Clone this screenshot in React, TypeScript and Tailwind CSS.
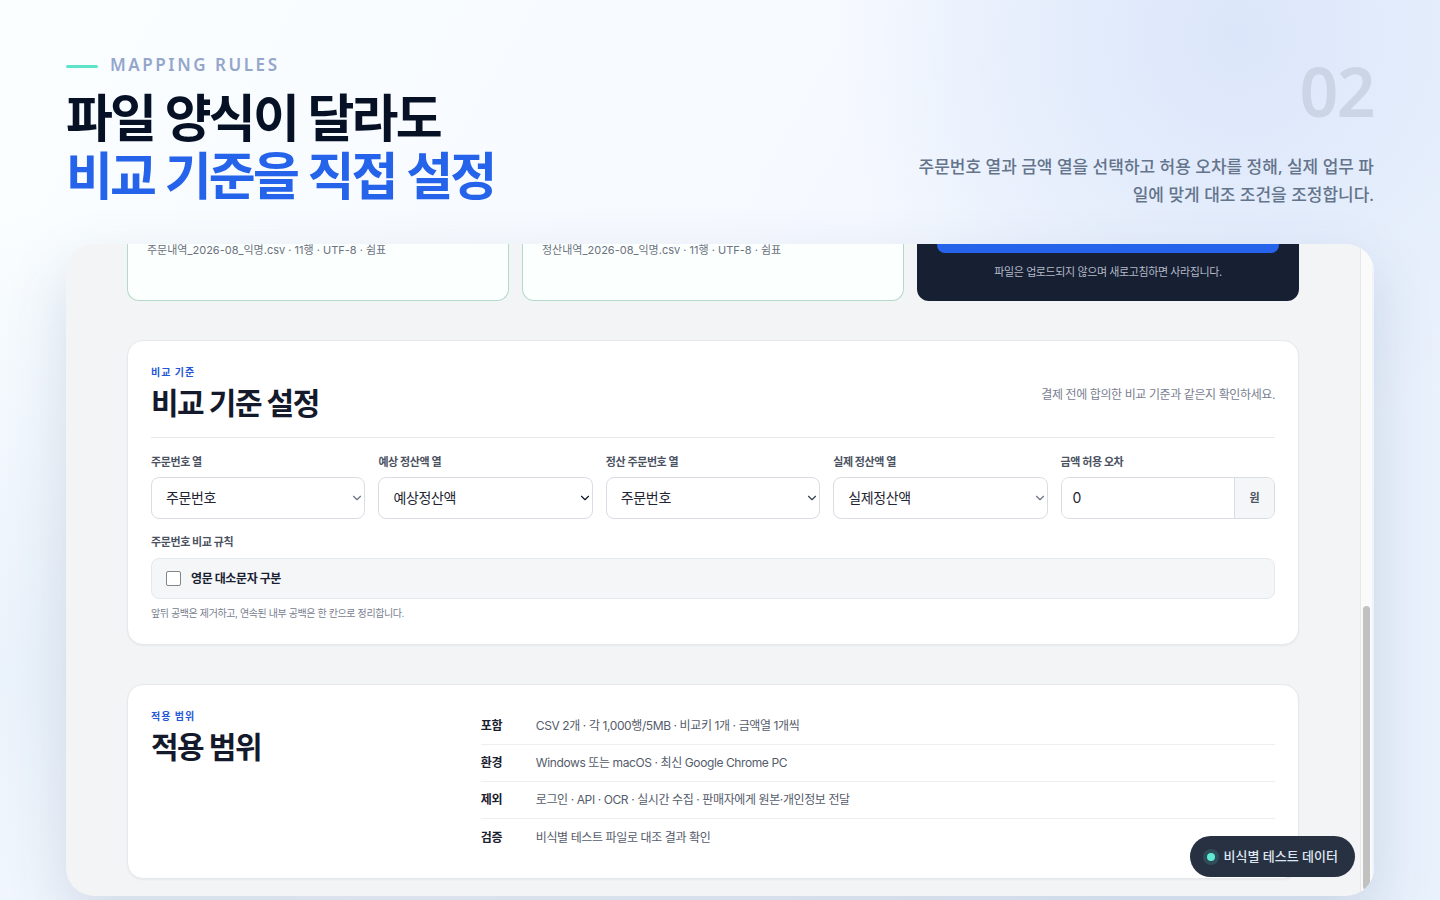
import React from 'react';
import { ChevronDown } from 'lucide-react';

const files = [
  '주문내역_2026-08_익명.csv · 11행 · UTF-8 · 쉼표',
  '정산내역_2026-08_익명.csv · 11행 · UTF-8 · 쉼표',
];

const columns = [
  { id: 'order-key', label: '주문번호 열', value: '주문번호', chevron: 'text-gray-500' },
  { id: 'expected', label: '예상 정산액 열', value: '예상정산액', chevron: 'text-gray-900' },
  { id: 'settle-key', label: '정산 주문번호 열', value: '주문번호', chevron: 'text-gray-700' },
  { id: 'actual', label: '실제 정산액 열', value: '실제정산액', chevron: 'text-gray-500' },
];

const scope = [
  { term: '포함', detail: 'CSV 2개 · 각 1,000행/5MB · 비교키 1개 · 금액열 1개씩' },
  { term: '환경', detail: 'Windows 또는 macOS · 최신 Google Chrome PC' },
  { term: '제외', detail: '로그인 · API · OCR · 실시간 수집 · 판매자에게 원본·개인정보 전달' },
  { term: '검증', detail: '비식별 테스트 파일로 대조 결과 확인' },
];

const SlideHeader = () => (
  <header className="flex items-end justify-between">
    <div className="pb-[5px]">
      <div className="flex items-center gap-3">
        <span className="mt-0.5 h-[3px] w-8 rounded-full bg-[#5fe3cb]" />
        <span className="text-[17px] leading-[26px] font-semibold tracking-[0.15em] text-[#94a6cb]">
          MAPPING RULES
        </span>
      </div>
      <h1 className="mt-2.5 text-[51px] leading-[58px] font-bold tracking-[-0.055em] text-[#061126]">
        파일 양식이 달라도
        <span className="block text-[#2563eb]">비교 기준을 직접 설정</span>
      </h1>
    </div>
    <div className="flex flex-col items-end text-right">
      <span className="text-[68px] leading-[66px] font-semibold tracking-tight text-[#ccd5e6]">02</span>
      <p className="mt-[29px] w-[460px] text-[17px] leading-7 font-medium text-[#64748b]">
        주문번호 열과 금액 열을 선택하고 허용 오차를 정해, 실제 업무 파일에 맞게 대조 조건을 조정합니다.
      </p>
    </div>
  </header>
);

const FileCards = () => (
  <div className="grid grid-cols-3 gap-[13px]">
    {files.map((file) => (
      <div
        key={file}
        className="h-[57px] rounded-b-xl border border-t-0 border-[#b5d8c8] bg-[#fbfffe] px-[19px] text-[11px] leading-3 tracking-normal text-[#6b7280]"
      >
        {file}
      </div>
    ))}
    <div className="h-[57px] rounded-b-xl bg-[#171f33] px-5 text-center">
      <div className="h-[9px] rounded-b-lg bg-[#2563eb]" />
      <p className="mt-[11px] text-[11px] leading-4 text-[#b4bac6]">
        파일은 업로드되지 않으며 새로고침하면 사라집니다.
      </p>
    </div>
  </div>
);

const SectionTitle = ({ eyebrow, title }: { eyebrow: string; title: string }) => (
  <div>
    <p className="text-[10px] leading-4 font-bold tracking-widest text-[#2457d6]">{eyebrow}</p>
    <h2 className="text-3xl leading-[46px] font-bold tracking-tighter text-[#141a2b]">{title}</h2>
  </div>
);

const RuleSettings = () => (
  <section className="mt-[39px] rounded-2xl border border-[#e5e8ec] bg-white px-[23px] py-[23px] shadow-xs">
    <div className="flex items-center justify-between border-b border-[#e8eaee] pb-[11px]">
      <SectionTitle eyebrow="비교 기준" title="비교 기준 설정" />
      <p className="text-xs text-[#7a8090]">결제 전에 합의한 비교 기준과 같은지 확인하세요.</p>
    </div>
    <div className="mt-4 grid grid-cols-5 gap-[13px]">
      {columns.map((column) => (
        <div key={column.id}>
          <label htmlFor={column.id} className="block text-[11px] leading-4 font-bold text-[#4b5262]">
            {column.label}
          </label>
          <div className="relative mt-[7px]">
            <select
              id={column.id}
              className="h-[42px] w-full appearance-none rounded-lg border border-[#d9dce2] bg-white px-3.5 text-sm tracking-tight text-[#1f2533]"
            >
              <option>{column.value}</option>
            </select>
            <ChevronDown
              className={`pointer-events-none absolute top-[14px] right-px h-3.5 w-3.5 ${column.chevron}`}
              strokeWidth={2}
            />
          </div>
        </div>
      ))}
      <div>
        <label htmlFor="tolerance" className="block text-[11px] leading-4 font-bold text-[#4b5262]">
          금액 허용 오차
        </label>
        <div className="mt-[7px] flex h-[42px] overflow-hidden rounded-lg border border-[#d9dce2]">
          <input
            id="tolerance"
            type="text"
            inputMode="numeric"
            defaultValue="0"
            className="w-full min-w-0 flex-1 bg-white px-[11px] text-sm text-[#1f2533]"
          />
          <span className="flex w-10 items-center justify-center border-l border-[#d9dce2] bg-[#f4f6f8] text-[11px] font-bold text-[#4b5262]">
            원
          </span>
        </div>
      </div>
    </div>
    <fieldset className="mt-[15px]">
      <legend className="text-[11px] leading-4 font-bold text-[#4b5262]">주문번호 비교 규칙</legend>
      <label className="mt-2 flex h-[41px] items-center gap-2.5 rounded-lg border border-[#e5e8ec] bg-[#f4f6f8] px-3.5 text-xs font-bold text-[#1a2030]">
        <input
          type="checkbox"
          className="h-[15px] w-[15px] appearance-none rounded-[2px] border border-[#858585] bg-white"
        />
        영문 대소문자 구분
      </label>
      <p className="mt-1.5 text-[10px] leading-4 text-[#7a8090]">
        앞뒤 공백은 제거하고, 연속된 내부 공백은 한 칸으로 정리합니다.
      </p>
    </fieldset>
  </section>
);

const ScopeCard = () => (
  <section className="mt-[39px] grid grid-cols-[3fr_8fr] gap-8 rounded-2xl border border-[#e5e8ec] bg-white px-[23px] pt-[23px] pb-[22px] shadow-xs">
    <SectionTitle eyebrow="적용 범위" title="적용 범위" />
    <dl className="divide-y divide-[#eceef1] text-xs">
      {scope.map((row) => (
        <div key={row.term} className="flex h-[37px] items-center">
          <dt className="w-[55px] font-bold text-[#1a2030]">{row.term}</dt>
          <dd className="text-[#555c6b]">{row.detail}</dd>
        </div>
      ))}
    </dl>
  </section>
);

export default function App() {
  return (
    <div className="min-h-screen overflow-hidden bg-[radial-gradient(circle_at_86%_4%,#dce6fa_0px,#e0eafbcc_170px,#e6effb00_400px),radial-gradient(circle_at_0%_75%,#eaf2fb_0px,#eaf2fb00_460px),linear-gradient(120deg,#fafeff_0%,#f6f9ff_45%,#e9f1fc_85%)] px-[66px] pt-[52px] pb-1 font-['Noto_Sans','Noto_Sans_CJK_KR',sans-serif]">
      <SlideHeader />
      <main className="relative mt-[35px] flex overflow-hidden rounded-[28px] bg-[#f3f4f6] font-['Inter','Noto_Sans_CJK_KR',sans-serif] tracking-tight shadow-[0_24px_60px_rgba(50,75,120,0.17)]">
        <div className="flex-1 px-[61px] pb-[17px]">
          <FileCards />
          <RuleSettings />
          <ScopeCard />
        </div>
        <div className="flex w-3.5 flex-col justify-end border-r-2 border-l border-r-[#f0f4fa] border-l-[#e6e7e9] bg-[#fafafa] px-0.5 pb-1.5">
          <div className="h-[44%] rounded-full bg-[#c1c1c1]" />
        </div>
        <div className="absolute right-[19px] bottom-[19px] flex h-[41px] items-center gap-[9px] rounded-full bg-[#283142] px-[17px] font-['Noto_Sans','Noto_Sans_CJK_KR',sans-serif] text-[13px] font-medium tracking-normal text-[#dfe7f2]">
          <span className="h-2 w-2 rounded-full bg-[#5eead4] ring-4 ring-[#5eead4]/15" />
          비식별 테스트 데이터
        </div>
      </main>
    </div>
  );
}
